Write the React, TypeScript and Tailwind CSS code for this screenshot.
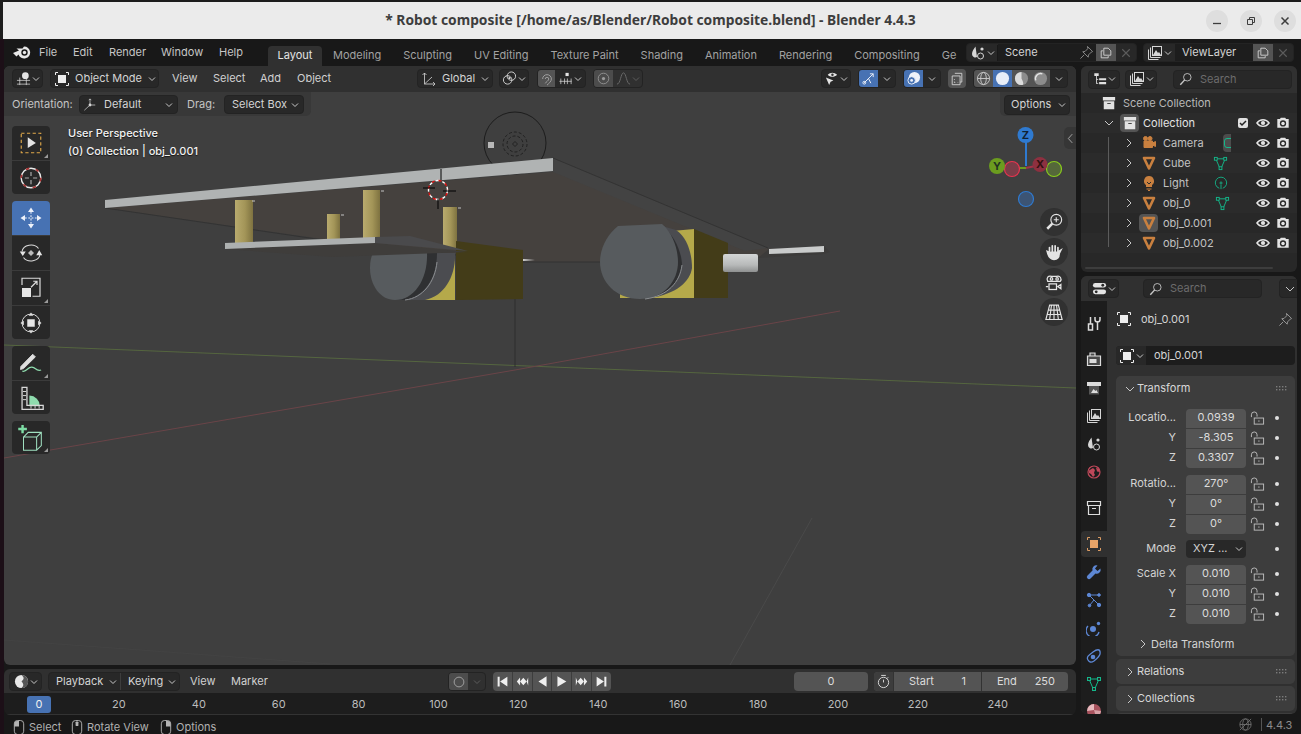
import type { ReactNode } from "react"

const ui = "font-['Inter','Noto_Sans',sans-serif]"

type IcoProps = { s?: number; c?: string; children: ReactNode; className?: string }
const Ico = ({ s = 16, c = "#d6d6d6", children, className = "" }: IcoProps) => (
  <svg viewBox="0 0 16 16" width={s} height={s} fill="none" stroke={c} strokeWidth={1} className={`shrink-0 ${className}`}>
    {children}
  </svg>
)

const Chev = ({ c = "#c8c8c8" }: { c?: string }) => (
  <svg viewBox="0 0 8 8" width={8} height={8} fill="none" stroke={c} strokeWidth={1} className="shrink-0">
    <path d="M1 2.5 4 5.5 7 2.5" />
  </svg>
)
const ChevR = ({ c = "#c8c8c8" }: { c?: string }) => (
  <svg viewBox="0 0 10 10" width={10} height={10} fill="none" stroke={c} strokeWidth={1} className="shrink-0">
    <path d="M3 1 7 5 3 9" />
  </svg>
)
const ChevD = ({ c = "#c8c8c8" }: { c?: string }) => (
  <svg viewBox="0 0 10 10" width={10} height={10} fill="none" stroke={c} strokeWidth={1} className="shrink-0">
    <path d="M1 3 5 7 9 3" />
  </svg>
)

const ObjSquare = ({ c = "#eeeeee", s = 16 }: { c?: string; s?: number }) => (
  <Ico s={s} c={c}>
    <rect x="4" y="4" width="8" height="8" fill={c} stroke="none" />
    <path d="M1.5 4V1.5H4M12 1.5h2.5V4M14.5 12v2.5H12M4 14.5H1.5V12" />
  </Ico>
)
const ScenePic = () => (
  <Ico>
    <path d="M5.5 1.5C4 4 2 6 2 9a3.4 3.4 0 0 0 5 3" fill="#d6d6d6" stroke="none" />
    <circle cx="10.5" cy="11" r="3" />
    <circle cx="12" cy="4" r="1.6" fill="#d6d6d6" stroke="none" />
  </Ico>
)
const Layers = () => (
  <Ico>
    <path d="M1.5 4.5v10h10M3.5 2.5v10h10" />
    <rect x="5.5" y="1.5" width="9" height="9" fill="#222" />
    <path d="M6 10 9 5l2 3 1-1 2 3z" fill="#d6d6d6" stroke="none" />
  </Ico>
)
const Copy = () => (
  <Ico s={14}>
    <path d="M2.5 5.5h2M2.5 5.5v8h8v-2" />
    <path d="M5.5 2.5h5l3 3v5h-8z" />
  </Ico>
)
const Cross = ({ c = "#5c5c5c" }: { c?: string }) => (
  <Ico s={12} c={c}>
    <path d="M3 3l10 10M13 3 3 13" strokeWidth={1.5} />
  </Ico>
)
const Pin = ({ c = "#8c8c8c" }: { c?: string }) => (
  <Ico s={15} c={c}>
    <path d="M9 1.5l5.5 5.5-1.4.6-3 3-.3 2.4-5.8-5.8 2.4-.3 3-3zM5.5 10.5l-4 4" />
  </Ico>
)
const Search = ({ c = "#c8c8c8" }: { c?: string }) => (
  <Ico s={14} c={c}>
    <circle cx="9.5" cy="6" r="4.3" />
    <path d="M6.5 9 1.5 14.5" strokeWidth={1.6} />
  </Ico>
)
const Eye = () => (
  <Ico s={14} c="#e4e4e4">
    <path d="M1 8c3.5-5 10.5-5 14 0-3.5 5-10.5 5-14 0z" strokeWidth={1.5} />
    <circle cx="8" cy="8" r="2.4" fill="#e4e4e4" stroke="none" />
  </Ico>
)
const Cam = () => (
  <Ico s={14} c="#e4e4e4">
    <path d="M1.5 3.5h3l1-1.5h5l1 1.5h3v10h-13z" fill="#e4e4e4" stroke="none" />
    <circle cx="8" cy="8.5" r="3.6" fill="#2a2a2a" stroke="none" />
    <circle cx="8" cy="8.5" r="2" fill="#e4e4e4" stroke="none" />
  </Ico>
)
const Tri = ({ s = 16, c = "#c9803f" }: { s?: number; c?: string }) => (
  <Ico s={s} c={c}>
    <path d="M3 3h10L8 13.5z" strokeWidth={2.6} strokeLinejoin="round" />
  </Ico>
)
const MeshTri = ({ c = "#14b78a", s = 15 }: { c?: string; s?: number }) => (
  <Ico s={s} c={c}>
    <path d="M3 3h10L8.5 13.5h-1z" />
    <rect x="1.5" y="1.5" width="3" height="3" fill="#282828" />
    <rect x="11.5" y="1.5" width="3" height="3" fill="#282828" />
    <rect x="6.5" y="11.5" width="3" height="3" fill="#282828" />
  </Ico>
)
const Box3 = ({ s = 14, c = "#e2e2e2" }: { s?: number; c?: string }) => (
  <Ico s={s} c={c}>
    <path d="M1 1h14v4H1z" fill={c} stroke="none" />
    <path d="M2 6h12v9H2z" fill={c} stroke="none" />
    <path d="M6 8.5h4" stroke="#444" strokeWidth={1.2} />
  </Ico>
)
const Lock = () => (
  <Ico s={15} c="#bdbdbd">
    <path d="M1.5 6.5V4a3 3 0 0 1 6 0v2" />
    <rect x="4.5" y="7.5" width="10" height="6.5" />
    <path d="M9.5 10v1.5" />
  </Ico>
)
const Grip = () => (
  <svg viewBox="0 0 12 5" width={12} height={5} className="shrink-0" fill="#7c7c7c">
    {[0, 3, 6, 9].map((x) => (
      <g key={x}>
        <rect x={x} y={0} width={1.4} height={1.4} />
        <rect x={x} y={3} width={1.4} height={1.4} />
      </g>
    ))}
  </svg>
)
const Mouse = ({ side }: { side: "l" | "m" | "r" }) => (
  <svg viewBox="0 0 12 16" width={12} height={15} className="shrink-0" fill="none" stroke="#b4b4b4">
    <rect x="1" y="0.5" width="10" height="15" rx="3.5" />
    {side === "l" && <path d="M1 7V4a3 3 0 0 1 3-3h2v6z" fill="#b4b4b4" stroke="none" />}
    {side === "m" && <rect x="4.5" y="1.5" width="3" height="5" rx="1" fill="#b4b4b4" stroke="none" />}
    {side === "r" && <path d="M11 7V4a3 3 0 0 0-3-3H6v6z" fill="#b4b4b4" stroke="none" />}
  </svg>
)

// small dropdown-style widget used in all the headers
const Drop = ({ children, className = "" }: { children: ReactNode; className?: string }) => (
  <div className={`h-[19px] shrink-0 whitespace-nowrap flex items-center rounded-[4px] bg-[#282828] border border-[#232323] text-[#d4d4d4] ${className}`}>
    {children}
  </div>
)

const tabs = ["Modeling", "Sculpting", "UV Editing", "Texture Paint", "Shading", "Animation", "Rendering", "Compositing", "Ge"]

function TopBar() {
  return (
    <div className="h-[27px] flex items-stretch text-[11px] text-[#c6c6c6]">
      <div className="w-[264px] flex items-center shrink-0 pl-[9px] pb-[1px]">
        <svg viewBox="0 0 18 14" width={18} height={14} className="shrink-0">
          <path d="M0 8 6 5.500 3.500 3.500H9.500L11 1.500a6 6 0 1 1-5.500 8L3.500 11.500z" fill="#e8e8e8" />
          <circle cx="11.500" cy="7.500" r="3.200" fill="#181818" />
          <circle cx="11.500" cy="7.500" r="1.700" fill="#e8e8e8" />
        </svg>
        <span className="ml-[8px] w-[34px] shrink-0">File</span>
        <span className="w-[36px] shrink-0">Edit</span>
        <span className="w-[52px] shrink-0">Render</span>
        <span className="w-[58px] shrink-0">Window</span>
        <span>Help</span>
      </div>
      <div className="w-[698px] shrink-0 overflow-hidden flex items-end pt-[6px]">
        <div className="h-[20px] w-[54px] shrink-0 rounded-t-[4px] bg-[#303030] text-[#e4e4e4] flex items-center justify-center pb-[1px]">Layout</div>
        {tabs.map((t) => (
          <div key={t} className="h-[20px] shrink-0 px-[11px] pb-[1px] text-[#a2a2a2] flex items-center">{t}</div>
        ))}
      </div>
      <div className="flex items-center">
        <Drop className="w-[171px] bg-[#222]">
          <div className="w-[31px] flex items-center justify-center gap-[1px] border-r border-[#181818]"><ScenePic /><Chev /></div>
          <div className="flex-1 h-full flex items-center pl-[7px] bg-[#1d1d1d]">Scene</div>
          <div className="w-[20px] h-full flex items-center justify-center bg-[#1d1d1d]"><Pin /></div>
          <div className="w-[20px] h-full flex items-center justify-center bg-[#545454]"><Copy /></div>
          <div className="w-[20px] flex items-center justify-center"><Cross /></div>
        </Drop>
        <Drop className="ml-[6px] w-[151px] bg-[#222]">
          <div className="w-[31px] flex items-center justify-center gap-[1px]"><Layers /><Chev /></div>
          <div className="flex-1 h-full flex items-center pl-[7px] bg-[#1d1d1d]">ViewLayer</div>
          <div className="w-[20px] h-full flex items-center justify-center bg-[#545454]"><Copy /></div>
          <div className="w-[20px] flex items-center justify-center"><Cross /></div>
        </Drop>
      </div>
    </div>
  )
}

function Scene() {
  return (
    <svg viewBox="4 66 1072 599" className="absolute inset-0 w-full h-full" fill="none">
      <defs>
        <linearGradient id="post" x1="0" x2="1" y1="0" y2="0">
          <stop offset="0" stopColor="#b9ab6e" />
          <stop offset="0.55" stopColor="#a39558" />
          <stop offset="1" stopColor="#7e7240" />
        </linearGradient>
        <linearGradient id="cyl" x1="0" x2="0" y1="0" y2="1">
          <stop offset="0" stopColor="#d4d6d6" />
          <stop offset="0.6" stopColor="#b8baba" />
          <stop offset="1" stopColor="#8e9090" />
        </linearGradient>
      </defs>
      {/* floor lines */}
      <path d="M4 345 1076 388" stroke="#55663f" />
      <path d="M4 458 515 370 840 311" stroke="#6a4448" />
      <path d="M730 665 812 518" stroke="#4a4a4a" />
      <path d="M4 640 330 664" stroke="#434343" />
      <path d="M515 243V367" stroke="#2e2e2e" />

      {/* light */}
      <circle cx="515" cy="143" r="31" stroke="#1d1d1d" />
      <circle cx="515" cy="144" r="12" stroke="#222" strokeDasharray="3 2" />
      <circle cx="515" cy="144" r="8" stroke="#222" strokeDasharray="3 2" />
      <path d="M515 141.5l2.5 2.5-2.5 2.5-2.5-2.5z" stroke="#222" />
      <rect x="488" y="142" width="6" height="6" fill="#b8b8b8" />

      {/* big plate underside */}
      <path d="M553 158 768 248 770 256 600 262 530 262 330 240 105 208 553 172z" fill="#45413e" />
      <path d="M553 158 768 248 745 251 553 172z" fill="#434343" />
      <path d="M553 158 768 248M105 208 330 241 520 262H600" stroke="#333" />

      {/* posts */}
      <rect x="235" y="200" width="18" height="44" fill="url(#post)" />
      <rect x="327" y="214" width="13" height="25" fill="url(#post)" />
      <rect x="363" y="190" width="17" height="48" fill="url(#post)" />
      <rect x="443" y="207" width="14" height="41" fill="url(#post)" />
      <path d="M252 201h3M341 215h3M381 191h3M458 208h3" stroke="#c4c4c4" />

      {/* left motor */}
      <path d="M456 241 523 250V299L456 300z" fill="#433c18" />
      <path d="M523 259 535 260 523 261z" fill="#d0d0d0" />
      <path d="M455 253V300H415z" fill="#b5a94a" />
      <path d="M400 253H455C456 275 445 296 425 300H395z" fill="#4b4c50" />
      <path d="M395 253H437C437 278 425 296 405 300H395z" fill="#2f3032" />
      <path d="M383 253H427C428 278 415 300 395 300 380 300 370 285 370 268 370 262 371 257 373 253z" fill="#575b5e" />
      <path d="M437 262C435 282 423 298 405 300" stroke="#8a8d90" />

      {/* small plate */}
      <path d="M225 249 332 257 468 252 375 243z" fill="#3f3d3b" />
      <path d="M375 237 410 236 468 251 375 243z" fill="#4a4a4c" />
      <path d="M225 243 375 237V243L225 249z" fill="#adb0b0" />

      {/* top of big plate */}
      <path d="M105 200 553 158V171L105 208z" fill="#b0b3b3" />

      {/* right motor */}
      <path d="M694 229 728 243V298H694z" fill="#433c18" />
      <path d="M672 231 694 229V298H620V294z" fill="#b5a94a" />
      <path d="M662 226 676 230C688 238 692 255 692 268 690 282 676 294 650 298H640z" fill="#4b4c50" />
      <path d="M662 226C676 236 682 255 682 265 680 282 668 296 640 299z" fill="#2f3032" />
      <path d="M618 226 662 224C673 233 678 250 678 262 678 280 665 299 640 299 616 299 600 282 600 262 600 248 607 235 618 226z" fill="#575b5e" />
      <path d="M682 265C680 282 668 296 645 299" stroke="#8a8d90" />
      <rect x="723" y="254" width="35" height="18" rx="2" fill="url(#cyl)" />
      <path d="M758 258 824 254 830 252 824 246 769 249z" fill="#3c3b3a" />
      <path d="M769 249 824 246V252L769 254z" fill="#c9cbcb" />

      {/* 3d cursor */}
      <circle cx="438" cy="190" r="9.5" stroke="#fff" strokeWidth={1.4} strokeDasharray="4 3" />
      <circle cx="438" cy="190" r="9.5" stroke="#d11" strokeWidth={1.4} strokeDasharray="3 4" strokeDashoffset="4" />
      <path d="M441 169V180M438 199V209M423 188H435M443 191H456" stroke="#000" />

      {/* nav gizmo */}
      <path d="M1026 135V166" stroke="#2f7ad0" strokeWidth={2} />
      <path d="M1012 168H1026" stroke="#6b9c1f" strokeWidth={2} />
      <path d="M1026 168 1040 165" stroke="#a33148" strokeWidth={2} />
      <circle cx="1026" cy="199" r="7.5" fill="#3c5474" stroke="#2f7ad0" strokeWidth={1.2} />
      <circle cx="1054" cy="169" r="7.5" fill="#55683a" stroke="#8acc1c" strokeWidth={1.2} />
      <circle cx="1012" cy="169" r="7.5" fill="#7a3d48" stroke="#e8344f" strokeWidth={1.2} />
      <circle cx="997" cy="166" r="8" fill="#6b9c1f" />
      <circle cx="1040" cy="164.5" r="7.5" fill="#8d3040" />
      <circle cx="1025.5" cy="135" r="8" fill="#2f7ad0" />
    </svg>
  )
}

const toolGroups: { key: string; h: number; active?: boolean; corner?: boolean; icon: ReactNode }[][] = [
  [
    { key: "select", h: 34, corner: true, icon: (
      <Ico s={26} c="#e0a84a">
        <rect x="2" y="2" width="12" height="12" strokeDasharray="2 1.5" strokeWidth={0.7} />
        <path d="M6 4.5 11 8 6 11z" fill="#e4e4e4" stroke="none" />
      </Ico>
    ) },
    { key: "cursor", h: 34, icon: (
      <Ico s={28} c="#e8e8e8">
        <circle cx="8" cy="8" r="5.6" strokeWidth={0.8} />
        <circle cx="8" cy="8" r="5.6" stroke="#a33" strokeWidth={0.9} strokeDasharray="2 3.800" />
        <path d="M8 4.5v2.3M8 9.2v2.3M4.5 8h2.3M9.2 8h2.3" stroke="#aaa" strokeWidth={0.7} />
      </Ico>
    ) },
  ],
  [
    { key: "move", h: 34, active: true, icon: (
      <Ico s={24} c="#eef2fa">
        <path d="M8 4v8M4 8h8" strokeWidth={0.7} strokeDasharray="1.2 1" />
        <path d="M8 1 10 4H6zM8 15 6 12h4zM1 8l3-2v4zM15 8l-3 2V6z" fill="#eef2fa" stroke="none" />
      </Ico>
    ) },
    { key: "rotate", h: 35, icon: (
      <Ico s={24} c="#dcdcdc">
        <path d="M2 7a6 5 0 0 1 11-2M14 9a6 5 0 0 1-11 2" strokeWidth={0.7} />
        <path d="M8 6l2 2-2 2-2-2z" fill="#bbb" stroke="none" />
        <path d="M0.5 7h4L2.5 10zM11.5 9.5h4L13.5 6z" fill="#e4e4e4" stroke="none" />
      </Ico>
    ) },
    { key: "scale", h: 35, corner: true, icon: (
      <Ico s={24} c="#dcdcdc">
        <path d="M2 6V1.5h12v12H9" strokeWidth={0.8} />
        <rect x="2" y="8" width="6" height="6" fill="#e6e6e6" stroke="none" />
        <path d="M8 7.5 12 3.5M9.5 3.5H12V6" strokeWidth={0.8} />
      </Ico>
    ) },
    { key: "transform", h: 34, icon: (
      <Ico s={26} c="#dcdcdc">
        <circle cx="8" cy="8" r="5.5" strokeWidth={0.6} />
        <rect x="5.7" y="5.7" width="4.6" height="4.6" fill="#e6e6e6" stroke="none" />
        <path d="M8 1.5 9.4 3.6H6.6zM8 14.5 6.6 12.4H9.4zM1.5 8l2.1-1.4v2.8zM14.5 8l-2.1 1.4V6.6z" fill="#dcdcdc" stroke="none" />
      </Ico>
    ) },
  ],
  [
    { key: "annotate", h: 34, corner: true, icon: (
      <Ico s={28} c="#e0e0e0">
        <path d="M2.2 10 9 3l1.5 1.5L3.7 11.2 2 11.7z" fill="#e0e0e0" strokeWidth={0.5} />
        <path d="M3 12.6c2.5 1 3-2.5 5.5-2.3s2 2.6 5.3 1.7" stroke="#8fdcae" strokeWidth={0.7} />
      </Ico>
    ) },
    { key: "measure", h: 34, icon: (
      <Ico s={26} c="#d8d8d8">
        <path d="M7 6.5a6.5 6.5 0 0 1 6.5 6.5H7z" fill="#8fdcae" stroke="none" />
        <path d="M2.5 1.5h3v11h10v2.5h-13z" strokeWidth={0.8} />
        <path d="M3 4h2M3 6.5h2M3 9h2M8 13v1.5M10.5 13v1.5M13 13v1.5" strokeWidth={0.6} />
      </Ico>
    ) },
  ],
  [
    { key: "add", h: 33, corner: true, icon: (
      <Ico s={30} c="#8fdcae">
        <path d="M3.5 1v4.5M1.2 3.2h4.6" strokeWidth={1.3} stroke="#7ddca4" />
        <path d="M4 7.5h7v7H4zM4 7.5 6.5 5H13.5V12L11 14.5M11 7.5 13.5 5" strokeWidth={0.55} stroke="#9fe0c0" />
      </Ico>
    ) },
  ],
]

function Toolbar() {
  return (
    <div className="relative ml-[8px] mt-[10px] w-[38px] flex flex-col gap-[7px]">
      {toolGroups.map((g, i) => (
        <div key={i} className="flex flex-col rounded-[4px] overflow-hidden">
          {g.map((t, j) => (
            <div
              key={t.key}
              style={{ height: t.h }}
              className={`relative flex items-center justify-center ${j > 0 ? "border-t border-[#3b3b3b]" : ""} ${t.active ? "bg-[#4772b3]" : "bg-[#282828]"}`}
            >
              {t.icon}
              {t.corner && <span className="absolute right-[2px] bottom-[2px] w-0 h-0 border-l-[4px] border-l-transparent border-b-[4px] border-b-[#9a9a9a]" />}
            </div>
          ))}
        </div>
      ))}
    </div>
  )
}

function ViewHeader() {
  return (
    <div className="relative h-[26px] bg-[#303030] flex items-center pl-[8px] pb-[1px] text-[11px] text-[#d0d0d0]">
      <Drop className="w-[31px] justify-center gap-[1px]">
        <Ico s={15}>
          <path d="M1 10h14M1 14h14M4 7v8M11 7v8" strokeWidth={0.8} />
          <circle cx="10" cy="5" r="3.6" fill="#e4e4e4" stroke="none" />
        </Ico>
        <Chev />
      </Drop>
      <Drop className="ml-[7px] w-[109px] pl-[3px]">
        <ObjSquare />
        <span className="ml-[5px]">Object Mode</span>
        <span className="ml-auto mr-[2px]"><Chev /></span>
      </Drop>
      <span className="ml-[13px] w-[41px] shrink-0">View</span>
      <span className="w-[47px] shrink-0">Select</span>
      <span className="w-[37px] shrink-0">Add</span>
      <span className="w-[120px] shrink-0">Object</span>
      <Drop className="w-[76px] pl-[3px]">
        <Ico s={16}>
          <path d="M3.5 13V2M1.5 4l2-2 2 2M3.5 13H14M12 11l2 2-2 2M3.5 13 11 6" strokeWidth={0.8} />
        </Ico>
        <span className="ml-[5px]">Global</span>
        <span className="ml-auto mr-[3px]"><Chev /></span>
      </Drop>
      <Drop className="ml-[6px] w-[30px] justify-center gap-[1px]">
        <Ico s={15}>
          <circle cx="6" cy="9.5" r="4.5" />
          <circle cx="10" cy="5.5" r="4.5" />
          <circle cx="8" cy="7.5" r="1.2" fill="#d6d6d6" stroke="none" />
        </Ico>
        <Chev />
      </Drop>
      <Drop className="ml-[8px] w-[49px] overflow-hidden">
        <div className="w-[17px] h-full bg-[#545454] flex items-center justify-center">
          <Ico s={14} c="#a8a8a8">
            <path d="M3 8a5 5 0 0 1 10 0c0 3-3 5-5 7M6 8a2 2 0 0 1 4 0c0 2-3 3-4 5" />
          </Ico>
        </div>
        <div className="flex-1 flex items-center justify-center gap-[1px]">
          <Ico s={15}>
            <rect x="8" y="2" width="3.4" height="3.4" fill="#e4e4e4" stroke="none" />
            <path d="M1.5 11h13M3 8v6M7 8v6M10 8v6M14 8v6" strokeWidth={0.8} />
          </Ico>
          <Chev />
        </div>
      </Drop>
      <Drop className="ml-[7px] w-[50px] overflow-hidden bg-[#303030] border-[#2b2b2b]">
        <div className="w-[19px] h-full bg-[#4c4c4c] flex items-center justify-center">
          <Ico s={13} c="#9c9c9c">
            <circle cx="8" cy="8" r="6.5" />
            <circle cx="8" cy="8" r="2" fill="#9c9c9c" stroke="none" />
          </Ico>
        </div>
        <div className="flex-1 flex items-center justify-center gap-[1px]">
          <Ico s={15} c="#6c6c6c"><path d="M1 14c4 0 4-12 7-12s3 12 7 12" /></Ico>
          <Chev c="#5c5c5c" />
        </div>
      </Drop>
      <Drop className="ml-[178px] w-[30px] justify-center gap-[1px]">
        <Ico s={15}>
          <path d="M2 7l8 3-3 1.5L5.5 15z" fill="#e4e4e4" stroke="none" />
          <path d="M4 4c2.5-3 7-3 10 0-3 3-7.500 3-10 0z" fill="#e4e4e4" stroke="none" />
          <circle cx="9" cy="4" r="1.3" fill="#303030" stroke="none" />
        </Ico>
        <Chev />
      </Drop>
      <Drop className="ml-[7px] w-[38px] overflow-hidden">
        <div className="w-[19px] h-full bg-[#4772b3] flex items-center justify-center">
          <Ico s={15} c="#eef2fa">
            <path d="M3.500 12.500 13 3M9.500 3H13V6.500M3.500 12.500 8 8l2.500 5" />
            <circle cx="3.500" cy="12.500" r="1.500" />
          </Ico>
        </div>
        <div className="flex-1 flex items-center justify-center"><Chev /></div>
      </Drop>
      <Drop className="ml-[7px] w-[38px] overflow-hidden">
        <div className="w-[19px] h-full bg-[#4772b3] flex items-center justify-center">
          <svg viewBox="0 0 16 16" width={15} height={15}>
            <circle cx="9" cy="7" r="6" fill="#eef2fa" />
            <circle cx="6" cy="10" r="4" fill="#4772b3" stroke="#eef2fa" />
            <circle cx="6" cy="10" r="1.500" fill="#eef2fa" />
          </svg>
        </div>
        <div className="flex-1 flex items-center justify-center"><Chev /></div>
      </Drop>
      <div className="ml-[7px] w-[18px] h-[19px] shrink-0 rounded-[4px] bg-[#545454] flex items-center justify-center">
        <Ico s={14}>
          <path d="M5.500 1.500h8v10h-2M2.500 4.500h9v10h-9z" />
          <path d="M5 8v1M5 11v1h1M9 11.500v.5" />
        </Ico>
      </div>
      <Drop className="ml-[7px] w-[95px] overflow-hidden">
        <div className="w-[19px] h-full bg-[#545454] flex items-center justify-center">
          <Ico s={15} c="#c8c8c8"><circle cx="8" cy="8" r="6.500" /><ellipse cx="8" cy="8" rx="3" ry="6.500" /><path d="M1.500 8h13" /></Ico>
        </div>
        <div className="w-[19px] h-full bg-[#4772b3] flex items-center justify-center">
          <svg viewBox="0 0 16 16" width={15} height={15}><circle cx="8" cy="8" r="7" fill="#e8eef8" /></svg>
        </div>
        <div className="w-[19px] h-full bg-[#545454] flex items-center justify-center">
          <svg viewBox="0 0 16 16" width={15} height={15}>
            <circle cx="8" cy="8" r="7" fill="#8c8c8c" />
            <path d="M8 1a7 7 0 0 0 0 14c3 0 2-3 0-7z" fill="#dcdcdc" />
          </svg>
        </div>
        <div className="w-[19px] h-full bg-[#545454] flex items-center justify-center">
          <svg viewBox="0 0 16 16" width={15} height={15}>
            <circle cx="8" cy="8" r="7" fill="#8c8c8c" />
            <path d="M3 10a5.500 5.500 0 0 1 7-7" stroke="#e4e4e4" strokeWidth={1.500} fill="none" />
          </svg>
        </div>
        <div className="flex-1 flex items-center justify-center"><Chev /></div>
      </Drop>
    </div>
  )
}

function ToolSettings() {
  return (
    <div className="relative h-[24px] flex items-stretch text-[11px] text-[#c4c4c4]">
      <div className="w-[307px] bg-[#383838] rounded-br-[5px] flex items-center pl-[8px] pt-[1px]">
        <span className="w-[67px] shrink-0">Orientation:</span>
        <Drop className="w-[99px] pl-[3px]">
          <Ico s={14}><path d="M8 1v7M6.500 2.500 8 1l1.500 1.500M8 8h6M1.500 14 8 8" strokeWidth={0.8} /><circle cx="8" cy="8" r="1.600" fill="#d6d6d6" stroke="none" /></Ico>
          <span className="ml-[7px]">Default</span>
          <span className="ml-auto mr-[4px]"><Chev /></span>
        </Drop>
        <span className="ml-[9px] w-[37px] shrink-0">Drag:</span>
        <Drop className="w-[80px] pl-[7px]">
          <span>Select Box</span>
          <span className="ml-auto mr-[4px]"><Chev /></span>
        </Drop>
      </div>
      <div className="flex-1" />
      <div className="w-[76px] bg-[#383838] rounded-bl-[5px] flex items-center pl-[4px] pt-[1px]">
        <Drop className="w-[66px] h-[20px] pl-[6px]">
          <span>Options</span>
          <span className="ml-auto mr-[3px]"><Chev /></span>
        </Drop>
      </div>
    </div>
  )
}

const navButtons = [
  <Ico key="zoom" s={18} c="#e4e4e4"><circle cx="10" cy="6" r="4.800" fill="#333" /><path d="M6.500 9.500 2 14" strokeWidth={2.200} /><path d="M10 3.800v4.400M7.800 6h4.400" /></Ico>,
  <Ico key="hand" s={18} c="#e4e4e4"><path d="M4 8.500V4M6.500 7.500V2.500M9 7.500V2.500M11.500 8V4M4 8.500 2 7.500C3 12 5 14.500 8 14.500c3 0 4.500-2 4.500-5l1.500-3-2.500 1.500z" fill="#e4e4e4" strokeWidth={1.500} strokeLinecap="round" /></Ico>,
  <Ico key="cam" s={20} c="#e4e4e4"><path d="M3 7.500C1.500 5 3.500 2.500 6 3.500h4c3-1 4.500 2 3 4z" /><circle cx="6" cy="5.500" r="1" /><circle cx="10.500" cy="5.500" r="1" /><rect x="4" y="9.500" width="6" height="4.500" /><path d="M13.500 10 11 11.700l2.500 1.800zM1.500 11.700h2" /></Ico>,
  <Ico key="grid" s={20} c="#e4e4e4"><path d="M4.500 2.500h7l3 11.500h-13zM8 2.500V14M3.500 6.500h9M2.700 10h10.600M6 2.500 4.500 14M10 2.500 11.500 14" strokeWidth={0.9} /></Ico>,
]

function Viewport() {
  return (
    <div className="relative h-[599px] shrink-0 bg-[#3f3f3f] rounded-[6px] overflow-hidden">
      <Scene />
      <ViewHeader />
      <ToolSettings />
      <Toolbar />
      {/* text overlay */}
      <div className="absolute left-[64px] top-[60px] flex flex-col gap-[4px] text-[11px] leading-[14px] font-medium text-[#f2f2f2] [text-shadow:0_1px_1px_#000a]">
        <span>User Perspective</span>
        <span>(0) Collection | obj_0.001</span>
      </div>
      {/* gizmo letters */}
      <span className="absolute left-[1013.500px] top-[62px] w-[16px] text-center text-[11px] leading-[14px] font-bold text-[#112233]">Z</span>
      <span className="absolute left-[985px] top-[93px] w-[16px] text-center text-[11px] leading-[14px] font-bold text-[#223322]">Y</span>
      <span className="absolute left-[1028px] top-[91px] w-[16px] text-center text-[11px] leading-[14px] font-bold text-[#331111]">X</span>
      {/* navigation buttons */}
      <div className="absolute left-[1036px] top-[142px] flex flex-col gap-[2px]">
        {navButtons.map((b) => (
          <div key={b.key} className="w-[28px] h-[28px] rounded-full bg-[#313131] flex items-center justify-center">{b}</div>
        ))}
      </div>
      <div className="absolute right-0 top-[61px] w-[12px] h-[22px] rounded-l-[5px] bg-[#363636] flex items-center justify-center">
        <svg viewBox="0 0 8 12" width={7} height={11} fill="none" stroke="#b4b4b4"><path d="M6 1 1.500 6 6 11" /></svg>
      </div>
    </div>
  )
}

const transport = [
  "M2 2h2.500v12H2zM14 2v12L5 8z",
  "M9 3.500 13 8l-4 4.500L5 8zM5 3v10L1 8zM15 3v10l-2-5z",
  "M13 1.500v13L3 8z",
  "M3 1.500v13L14 8z",
  "M7 3.500 11 8l-4 4.500L3 8zM11 3v10l4-5zM1 3v10l2-5z",
  "M11.500 2H14v12h-2.500zM2 2v12l9-6z",
]

function Timeline() {
  const marks = [20, 40, 60, 80, 100, 120, 140, 160, 180, 200, 220, 240]
  return (
    <div className="mt-[4px] h-[46px] shrink-0 rounded-[6px] overflow-hidden bg-[#1d1d1d] flex flex-col text-[11px]">
      <div className="h-[24px] bg-[#303030] flex items-center pl-[5px] pt-[1px] text-[#d0d0d0] shrink-0">
        <Drop className="w-[33px] justify-center gap-[1px]">
          <svg viewBox="0 0 16 16" width={15} height={15}>
            <circle cx="8" cy="8" r="7" fill="#e8e8e8" />
            <path d="M8 1c3 3 3 4 0 7 3 3 2 5 0 7 5 0 7-3 7-7s-3-7-7-7z" fill="#555" />
          </svg>
          <Chev />
        </Drop>
        <Drop className="ml-[6px] w-[132px] overflow-hidden">
          <div className="w-[72px] h-full flex items-center pl-[7px] border-r border-[#3d3d3d]">
            Playback<span className="ml-auto mr-[3px]"><Chev /></span>
          </div>
          <div className="flex-1 h-full flex items-center pl-[7px]">
            Keying<span className="ml-auto mr-[3px]"><Chev /></span>
          </div>
        </Drop>
        <span className="ml-[10px] w-[41px] shrink-0">View</span>
        <span className="w-[217px] shrink-0">Marker</span>
        <Drop className="w-[38px] overflow-hidden bg-[#303030] border-[#2b2b2b]">
          <div className="w-[19px] h-full bg-[#4c4c4c] flex items-center justify-center">
            <Ico s={12} c="#a0a0a0"><circle cx="8" cy="8" r="6.500" strokeWidth={1.300} /></Ico>
          </div>
          <div className="flex-1 flex items-center justify-center"><Chev c="#5c5c5c" /></div>
        </Drop>
        <div className="ml-[7px] w-[118px] h-[19px] shrink-0 rounded-[4px] overflow-hidden bg-[#545454] flex items-center">
          {transport.map((d, i) => (
            <div key={i} className={`flex-1 h-full flex items-center justify-center ${i > 0 ? "border-l border-[#3d3d3d]" : ""}`}>
              <svg viewBox="0 0 16 16" width={13} height={13} fill="#efefef"><path d={d} /></svg>
            </div>
          ))}
        </div>
        <div className="ml-[183px] w-[74px] h-[19px] shrink-0 rounded-[4px] bg-[#545454] flex items-center justify-center text-[#dcdcdc]">0</div>
        <div className="ml-[6px] w-[194px] h-[19px] shrink-0 rounded-[4px] bg-[#545454] flex items-center text-[#dcdcdc] overflow-hidden">
          <div className="w-[20px] h-full flex items-center justify-center bg-[#3d3d3d] border-r border-[#333]">
            <Ico s={15} c="#dcdcdc"><circle cx="8" cy="9" r="5.500" /><path d="M8 9V6M5.500 1.500h5M13 3.500l-1.500 1.500" /></Ico>
          </div>
          <div className="w-[88px] h-full flex items-center px-[15px] border-r border-[#333]"><span>Start</span><span className="ml-auto">1</span></div>
          <div className="flex-1 flex items-center pl-[15px] pr-[13px]"><span>End</span><span className="ml-auto">250</span></div>
        </div>
      </div>
      <div className="relative flex-1 flex items-center pt-[1px] text-[#bcbcbc] border-b border-[#333]">
        <div className="w-[23px] shrink-0" />
        <div className="w-[24px] h-[17px] mr-[28px] shrink-0 rounded-[3px] bg-[#4772b3] text-[#f0f0f0] flex items-center justify-center">0</div>
        {marks.map((m) => (
          <div key={m} className="w-[79.9px] shrink-0 text-center">{m}</div>
        ))}
      </div>
    </div>
  )
}

type Row = { label: string; icon: ReactNode; sub?: ReactNode; active?: boolean }
const rows: Row[] = [
  { label: "Camera", icon: (
    <Ico s={16} c="#c9803f"><path d="M3 6h8.500v6.500H3zM11.500 8l3-1.500v5l-3-1.500" fill="#c9803f" /><circle cx="4.500" cy="3.500" r="2" fill="#c9803f" /><circle cx="9" cy="3.500" r="2" fill="#c9803f" /></Ico>
  ), sub: (
    <div className="ml-[10px] w-[8px] h-[18px] rounded-l-[4px] bg-[#4c4c4c] overflow-hidden flex items-center justify-start">
      <span className="ml-[1px] w-[10px] h-[10px] rounded-[3px] border border-[#14b78a] shrink-0" />
    </div>
  ) },
  { label: "Cube", icon: <Tri />, sub: <MeshTri /> },
  { label: "Light", icon: (
    <Ico s={16} c="#c9803f"><path d="M8 1a5 5 0 0 0-3 9v2h6v-2a5 5 0 0 0-3-9z" fill="#c9803f" stroke="none" /><path d="M5.500 14h5M7 15.500h2" strokeWidth={1.200} /><path d="M6 7l2 2 2-2" stroke="#2a2a2a" /></Ico>
  ), sub: (
    <span className="ml-[1px]">
      <Ico s={14} c="#14b78a"><path d="M6 14a6.500 6.500 0 1 1 4 0" /><circle cx="8" cy="8" r="1.200" /><path d="M8 10v5" /></Ico>
    </span>
  ) },
  { label: "obj_0", icon: <Tri />, sub: <span className="ml-[2px]"><MeshTri /></span> },
  { label: "obj_0.001", active: true, icon: <Tri /> },
  { label: "obj_0.002", icon: <Tri /> },
]

function Outliner() {
  return (
    <div className="relative h-[206px] shrink-0 rounded-[6px] overflow-hidden bg-[#282828] text-[11px] text-[#c2c2c2]">
      <div className="h-[27px] bg-[#303030] flex items-center pl-[7px] pb-[1px]">
        <Drop className="w-[32px] justify-center gap-[1px]">
          <Ico s={14}>
            <path d="M1.500 1.500h5v3h-5z" fill="#e0e0e0" stroke="none" />
            <path d="M4 4.500v9M4 8.500h2M4 13h2" />
            <path d="M7 7h8v2.500H7zM7 11.500h8V14H7z" fill="#e0e0e0" stroke="none" />
          </Ico>
          <Chev />
        </Drop>
        <Drop className="ml-[5px] w-[32px] justify-center gap-[1px]"><Layers /><Chev /></Drop>
        <Drop className="ml-[16px] w-[119px] pl-[5px] bg-[#272727]">
          <Search />
          <span className="ml-[7px] text-[#6c6c6c]">Search</span>
        </Drop>
      </div>
      <div className="h-[20px] flex items-center pl-[21px]">
        <Box3 />
        <span className="ml-[7px] text-[#b8b8b8]">Scene Collection</span>
      </div>
      <div className="h-[20px] flex items-center bg-[#2b2b2b] pl-[23px]">
        <ChevD />
        <div className="ml-[6px] w-[19px] h-[18px] rounded-[4px] bg-[#545454] flex items-center justify-center"><Box3 /></div>
        <span className="ml-[4px] text-[#e4e4e4]">Collection</span>
        <div className="ml-auto mr-[7px] flex items-center gap-[6px]">
          <div className="w-[10px] h-[10px] rounded-[2px] bg-[#e0e0e0] flex items-center justify-center">
            <svg viewBox="0 0 10 10" width={10} height={10} fill="none" stroke="#222" strokeWidth={1.500}><path d="M2 5l2 2 4-4" /></svg>
          </div>
          <span className="ml-[2px]"><Eye /></span>
          <Cam />
        </div>
      </div>
      {rows.map((r, i) => (
        <div key={r.label} className={`h-[20px] flex items-center pl-[43px] ${i % 2 === 0 ? "bg-[#282828]" : "bg-[#2b2b2b]"}`}>
          <ChevR />
          <div className={`ml-[5px] w-[19px] h-[18px] rounded-[4px] flex items-center justify-center shrink-0 ${r.active ? "bg-[#545454]" : ""}`}>{r.icon}</div>
          <span className="ml-[5px] w-[50px] shrink-0 whitespace-nowrap">{r.label}</span>
          {r.sub}
          <div className="ml-auto mr-[7px] flex items-center gap-[6px]">
            <Eye />
            <Cam />
          </div>
        </div>
      ))}
      {/* tree line */}
      <span className="absolute left-[27px] top-[71px] w-px h-[110px] bg-[#5c5c5c]" />
      <span className="absolute left-[4px] right-[24px] bottom-[3px] h-[2px] rounded-full bg-[#3d3d3d]" />
    </div>
  )
}

const propTabs: { key: string; gap: number; active?: boolean; icon: ReactNode }[] = [
  { key: "tool", gap: 15, icon: <Ico c="#dcdcdc"><path d="M4.500 1v7M2.500 8h4v6h-4zM11.500 5v9M9 1v2.500a2.500 2.500 0 0 0 5 0V1" strokeWidth={1.500} /></Ico> },
  { key: "render", gap: 19, icon: <Ico c="#dcdcdc"><path d="M1.500 5h13v9.500h-13zM4 2h5v3H4z" fill="#4a4a4a" strokeWidth={1.200} /><path d="M3.500 8h7v4h-7z" fill="#dcdcdc" stroke="none" /></Ico> },
  { key: "output", gap: 13, icon: <Ico c="#dcdcdc"><path d="M1 2h14v4H1z" fill="#dcdcdc" stroke="none" /><path d="M3 6h10v8.500H3z" fill="#555" stroke="none" /><path d="M5 13l2.500-4 2 2 1-1L12 13z" fill="#dcdcdc" stroke="none" /></Ico> },
  { key: "view", gap: 12, icon: <Layers /> },
  { key: "scene", gap: 12, icon: <ScenePic /> },
  { key: "world", gap: 12, icon: <Ico c="#c0485a"><circle cx="8" cy="8" r="6" strokeWidth={1.200} /><path d="M3 6.500 7 4l2 2-1 3 1 2-2 2-2-3-2-1zM10 3.500l3 1.500 1 3-3-.500z" fill="#c0485a" stroke="none" /></Ico> },
  { key: "collection", gap: 20, icon: <Ico c="#dcdcdc"><path d="M1.500 1.500h13v4h-13zM2.500 5.500h11v9h-11zM6 8.500h4" strokeWidth={1.200} /></Ico> },
  { key: "object", gap: 15, active: true, icon: (
    <Ico c="#d99a62"><rect x="4" y="4" width="8" height="8" fill="#e8a468" stroke="none" /><path d="M1.500 4V1.500H4M12 1.500h2.500V4M14.500 12v2.500H12M4 14.500H1.500V12" /></Ico>
  ) },
  { key: "modifier", gap: 7, icon: <Ico c="#5d87d4"><path d="M14.500 4.500 11.500 7 9 4.500 11.500 1.500a4 4 0 0 0-5 5L1.500 11.500A2 2 0 0 0 4.500 14.500l5-5a4 4 0 0 0 5-5z" fill="#5d87d4" stroke="none" /></Ico> },
  { key: "particles", gap: 12, icon: <Ico c="#5d87d4"><path d="M3 3l5 5-4.500 5.500M3 3l9.500 0M8 8l5 5" /><circle cx="3" cy="3" r="1.700" fill="#5d87d4" /><circle cx="13" cy="3" r="1.300" fill="#5d87d4" /><circle cx="3.500" cy="13.500" r="1.300" fill="#5d87d4" /><circle cx="13" cy="13" r="1.700" fill="#5d87d4" /></Ico> },
  { key: "physics", gap: 12, icon: <Ico c="#5d87d4"><circle cx="7" cy="9" r="3" fill="#5d87d4" stroke="none" /><path d="M2 6a6.500 6.500 0 1 0 11 6" strokeWidth={1.300} /><circle cx="12.500" cy="3.500" r="1.700" fill="#5d87d4" stroke="none" /></Ico> },
  { key: "constraints", gap: 12, icon: <Ico c="#5d87d4"><path d="M2 12c-2-3 1-5 5-8s7-3 7 0c1 3-2 6-6 9-3 2-5 1-6-1z" strokeWidth={1.300} /><circle cx="7" cy="9" r="2.300" fill="#5d87d4" stroke="none" /></Ico> },
  { key: "data", gap: 12, icon: <MeshTri s={16} /> },
  { key: "material", gap: 11, icon: (
    <svg viewBox="0 0 16 16" width={16} height={16}><circle cx="8" cy="8" r="7" fill="#a8535e" /><path d="M8 1a7 7 0 0 0-7 7l7-1z" fill="#e7b9bd" /><path d="M8 7l7 1a7 7 0 0 1-5 6z" fill="#d6a0a6" /></svg>
  ) },
]

const Field = ({ label, value, pos }: { label: string; value: string; pos: "t" | "m" | "b" }) => (
  <div className="h-[20px] flex items-center text-[11px]">
    <span className="w-[60px] pb-[2px] text-right text-[#d4d4d4] shrink-0 whitespace-nowrap">{label}</span>
    <div
      className={`ml-[10px] w-[60px] h-[19px] pb-[1px] bg-[#545454] text-[#dcdcdc] flex items-center justify-center ${
        pos === "t" ? "rounded-t-[4px]" : pos === "b" ? "rounded-b-[4px]" : ""
      }`}
    >
      {value}
    </div>
    <span className="ml-[4px]"><Lock /></span>
    <span className="ml-[10px] w-[4px] h-[4px] rounded-full bg-[#e0e0e0]" />
  </div>
)

const Panel = ({ label, gap }: { label: string; gap: string }) => (
  <div className={`${gap} h-[25px] shrink-0 rounded-[5px] bg-[#3d3d3d] flex items-center pl-[9px] pr-[7px] text-[11px] text-[#d8d8d8]`}>
    <ChevR />
    <span className="ml-[2px]">{label}</span>
    <span className="ml-auto"><Grip /></span>
  </div>
)

function Properties() {
  return (
    <div className="mt-[4px] flex-1 min-h-0 rounded-[6px] overflow-hidden bg-[#303030] flex flex-col text-[11px] text-[#d4d4d4]">
      <div className="h-[25px] shrink-0 bg-[#303030] flex items-center pl-[7px]">
        <Drop className="w-[31px] justify-center gap-[1px]">
          <Ico s={15} c="#e4e4e4">
            <rect x="1" y="2" width="14" height="5" rx="2.500" fill="#e4e4e4" stroke="none" />
            <rect x="1" y="9" width="14" height="5" rx="2.500" fill="#e4e4e4" stroke="none" />
            <circle cx="11.500" cy="4.500" r="1.500" fill="#282828" stroke="none" />
            <circle cx="4.500" cy="11.500" r="1.500" fill="#282828" stroke="none" />
          </Ico>
          <Chev />
        </Drop>
        <Drop className="ml-[24px] w-[119px] pl-[5px] bg-[#272727]">
          <Search />
          <span className="ml-[7px] text-[#6c6c6c]">Search</span>
        </Drop>
        <Drop className="ml-[17px] w-[20px] justify-center rounded-r-none border-r-0 bg-[#2d2d2d]"><ChevD /></Drop>
      </div>
      <div className="flex-1 min-h-0 flex">
        <div className="w-[26px] shrink-0 bg-[#1d1d1d] flex flex-col items-center overflow-hidden">
          {propTabs.map((t) => (
            <div
              key={t.key}
              style={{ marginTop: t.gap }}
              className={`relative w-full flex items-center justify-center shrink-0 ${t.active ? "h-[26px] bg-[#303030] rounded-l-[4px]" : "h-[16px]"}`}
            >
              {t.icon}
            </div>
          ))}
        </div>
        <div className="flex-1 min-w-0 pl-[9px] pr-[2px] flex flex-col">
          <div className="h-[33px] mt-[1px] shrink-0 flex items-center pt-[1px]">
            <ObjSquare />
            <span className="ml-[9px]">obj_0.001</span>
            <span className="ml-auto mr-[2px]"><Pin c="#9c9c9c" /></span>
          </div>
          <div className="mt-[11px] h-[19px] shrink-0 rounded-[4px] bg-[#1d1d1d] flex items-center overflow-hidden">
            <div className="w-[31px] h-full bg-[#282828] flex items-center justify-center gap-[1px] border-r border-[#1d1d1d]">
              <ObjSquare />
              <Chev />
            </div>
            <span className="ml-[7px]">obj_0.001</span>
          </div>
          <div className="mt-[11px] shrink-0 rounded-[5px] bg-[#3d3d3d] h-[280px]">
            <div className="h-[25px] flex items-center pl-[9px] pr-[7px] text-[#d8d8d8]">
              <ChevD />
              <span className="ml-[2px]">Transform</span>
              <span className="ml-auto"><Grip /></span>
            </div>
            <div className="mt-[7px]">
              <Field label="Locatio..." value="0.0939" pos="t" />
              <Field label="Y" value="-8.305" pos="m" />
              <Field label="Z" value="0.3307" pos="b" />
            </div>
            <div className="mt-[6px]">
              <Field label="Rotatio..." value="270°" pos="t" />
              <Field label="Y" value="0°" pos="m" />
              <Field label="Z" value="0°" pos="b" />
            </div>
            <div className="mt-[5px] h-[19px] flex items-center">
              <span className="w-[60px] text-right shrink-0">Mode</span>
              <div className="ml-[10px] w-[60px] h-[18px] rounded-[4px] bg-[#282828] flex items-center pl-[7px] pr-[3px]">
                <span>XYZ ...</span>
                <span className="ml-auto"><Chev /></span>
              </div>
              <span className="ml-[29px] w-[4px] h-[4px] rounded-full bg-[#e0e0e0]" />
            </div>
            <div className="mt-[6px]">
              <Field label="Scale X" value="0.010" pos="t" />
              <Field label="Y" value="0.010" pos="m" />
              <Field label="Z" value="0.010" pos="b" />
            </div>
            <div className="mt-[10px] flex items-center pl-[22px] h-[20px]">
              <ChevR />
              <span className="ml-[3px]">Delta Transform</span>
            </div>
          </div>
          <Panel label="Relations" gap="mt-[3px]" />
          <Panel label="Collections" gap="mt-[2px]" />
          <div className="mt-[2px] h-[25px] shrink-0 rounded-[5px] bg-[#3d3d3d]" />
        </div>
      </div>
    </div>
  )
}

const winBtn = "w-[22px] h-[22px] rounded-full bg-[#dedede] flex items-center justify-center"

export default function App() {
  return (
    <div className={`w-[1301px] h-[734px] overflow-hidden flex flex-col bg-[#181818] ${ui}`}>
      {/* window title bar */}
      <div className="h-[39px] shrink-0 bg-[#1c1c1c] pt-[2px] pl-[3px]">
        <div className="relative h-[37px] bg-[#ebebeb] flex items-center justify-center">
          <span className="font-['Noto_Sans',sans-serif] font-bold text-[13.8px] text-[#3d3d3d] pr-[3px]">
            * Robot composite [/home/as/Blender/Robot composite.blend] - Blender 4.4.3
          </span>
          <div className="absolute right-[5px] top-[8px] flex gap-[12px]">
            <div className={winBtn}><svg viewBox="0 0 10 10" width={10} height={10} stroke="#3d3d3d" strokeWidth={1.300}><path d="M1 7.500h8" /></svg></div>
            <div className={winBtn}><svg viewBox="0 0 10 10" width={10} height={10} fill="none" stroke="#3d3d3d"><path d="M1.500 3.500h5v5h-5zM3.500 3.500v-2h5v5h-2" /></svg></div>
            <div className={winBtn}><svg viewBox="0 0 10 10" width={10} height={10} stroke="#3d3d3d" strokeWidth={1.500}><path d="M1.500 1.500l7 7M8.500 1.500l-7 7" /></svg></div>
          </div>
        </div>
      </div>
      <div className="flex-1 min-h-0 flex">
        <div className="w-[4px] shrink-0 bg-[#1c0f17]" />
        <div className="flex-1 min-w-0 flex flex-col">
          <TopBar />
          <div className="flex-1 min-h-0 flex">
            <div className="w-[1072px] shrink-0 flex flex-col">
              <Viewport />
              <Timeline />
              <div className="flex-1 flex items-center pl-[9px] pt-[4px] text-[11px] text-[#b0b0b0]">
                <Mouse side="l" />
                <span className="ml-[4px] w-[42px] shrink-0">Select</span>
                <Mouse side="m" />
                <span className="ml-[4px] w-[73px] shrink-0">Rotate View</span>
                <Mouse side="r" />
                <span className="ml-[4px]">Options</span>
              </div>
            </div>
            <div className="ml-[5px] w-[216px] shrink-0 flex flex-col pb-[20px] relative">
              <Outliner />
              <Properties />
              <div className="absolute left-[157px] bottom-[1px] flex items-center text-[11px] text-[#8c8c8c]">
                <Ico s={15} c="#6c6c6c"><circle cx="8" cy="8" r="6" /><ellipse cx="8" cy="8" rx="3" ry="6" /><path d="M2 8h12M2 14 14 2" /></Ico>
                <span className="ml-[8px] w-px h-[13px] bg-[#555]" />
                <span className="ml-[4px] whitespace-nowrap">4.4.3</span>
              </div>
            </div>
          </div>
        </div>
      </div>
    </div>
  )
}
